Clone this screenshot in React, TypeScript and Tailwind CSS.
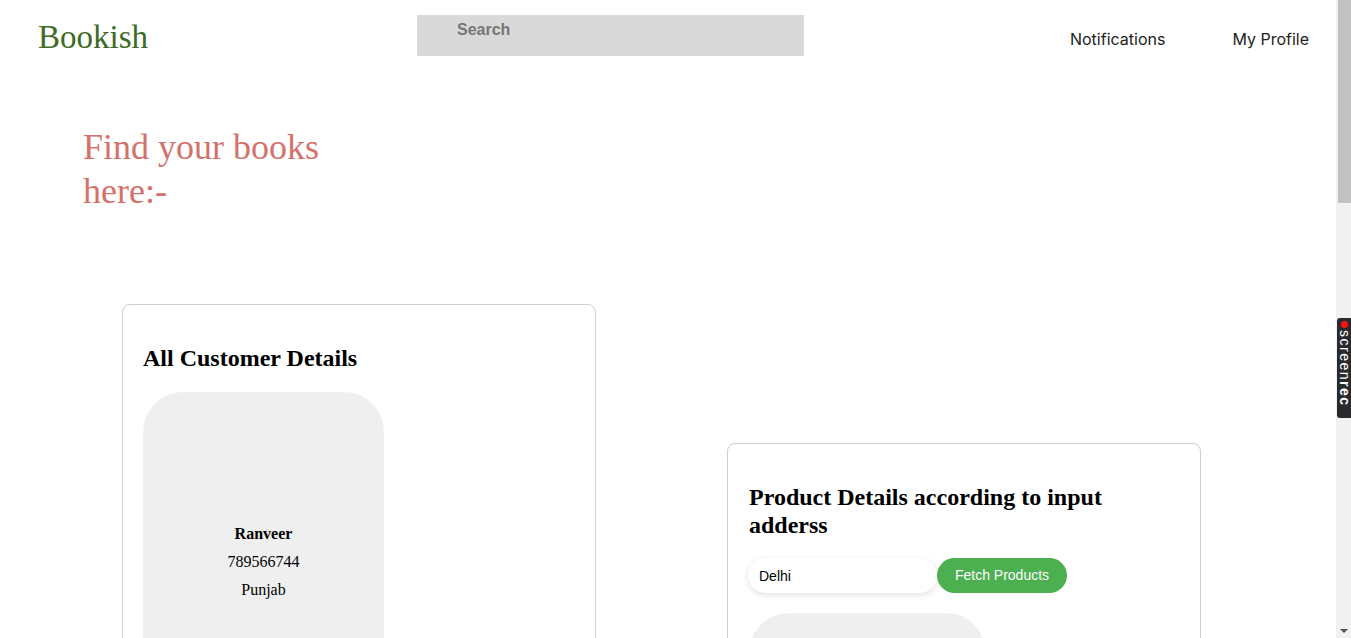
import { useState } from 'react'

const serif = "font-['Liberation_Serif','Times_New_Roman',serif]"
const sans = "font-['Liberation_Sans',Arial,sans-serif]"

function Header() {
  return (
    <header className="flex items-start h-[72px]">
      <div className={`${serif} text-[33px] text-[#3d6b27] leading-none pl-[38px] pt-[21px] w-[417px]`}>Bookish</div>
      <input
        className={`${sans} mt-[15px] w-[387px] h-[41px] bg-[#d9d9d9] pl-[40px] pt-[4px] pb-[16px] text-[16px] font-semibold text-[#333] placeholder:text-[#767676] outline-none`}
        placeholder="Search"
      />
      <nav className="ml-auto flex gap-[67px] pr-[27px] pt-[29px] font-['Inter',sans-serif] text-[16px] text-[#222] leading-[20px]">
        <a>Notifications</a>
        <a>My Profile</a>
      </nav>
    </header>
  )
}

function Customers() {
  const customers = [{ name: 'Ranveer', phone: '789566744', city: 'Punjab' }]
  return (
    <section className="w-[474px] h-[400px] shrink-0 border border-[#cfcfcf] rounded-[8px] px-[20px] pt-[20px]">
      <h2 className={`${serif} text-[24px] font-bold leading-[27.6px] mt-[20px] mb-[19px] text-black`}>All Customer Details</h2>
      {customers.map((c) => (
        <div key={c.phone} className={`${serif} w-[241px] h-[300px] bg-[#efefef] rounded-t-[40px] flex flex-col items-center pt-[128px] text-[16px] leading-[28px] text-black`}>
          <div className="font-bold">{c.name}</div>
          <div>{c.phone}</div>
          <div>{c.city}</div>
        </div>
      ))}
    </section>
  )
}

function Products() {
  const [city, setCity] = useState('Delhi')
  return (
    <section className="w-[474px] h-[300px] shrink-0 mt-[139px] border border-[#cfcfcf] rounded-[8px] pl-[21px] pr-[20px] pt-[20px]">
      <h2 className={`${serif} text-[24px] font-bold leading-[27.6px] mt-[20px] mb-[19px] text-black`}>
        Product Details according to input adderss
      </h2>
      <div className={`${sans} flex items-center text-[14px] -ml-px`}>
        <input
          value={city}
          onChange={(e) => setCity(e.target.value)}
          className="w-[189px] h-[35px] rounded-full bg-white pl-[11px] shadow-[0_2px_6px_rgba(0,0,0,0.12)] outline-none text-black"
        />
        <button className="w-[130px] h-[35px] rounded-full bg-[#4caf50] text-white">Fetch Products</button>
      </div>
      <div className="mt-[20px] w-[237px] h-[200px] bg-[#efefef] rounded-t-[40px]" />
    </section>
  )
}

export default function App() {
  return (
    <div className="relative w-[1351px] h-[638px] overflow-hidden bg-white flex">
      <main className="w-[1336px] shrink-0">
        <Header />
        <h1 className={`${serif} text-[36px] leading-[44px] text-[#d4716b] pl-[83px] pt-[53px] w-[340px]`}>
          Find your books here:-
        </h1>
        <div className="flex gap-[131px] pl-[122px] mt-[91px]">
          <Customers />
          <Products />
        </div>
      </main>
      <div className="w-[15px] h-full bg-[#f1f1f1] flex flex-col items-end">
        <div className="w-[13px] h-[203px] bg-[#c1c1c1]" />
        <div className="mt-auto mb-[5px] mr-[3px] w-0 h-0 border-x-[4px] border-x-transparent border-t-[4px] border-t-[#505050]" />
      </div>
      <div className="absolute right-0 top-[318px] w-[14px] h-[100px] bg-[#2a2a2e] rounded-l-[3px] flex flex-col items-center pt-[3px]">
        <div className="w-[7px] h-[7px] rounded-full bg-[#ff1010]" />
        <div className={`${sans} mt-[2px] text-[14px] leading-[13px] tracking-[1.5px] text-white [writing-mode:vertical-rl]`}>
          screen<span className="font-bold">rec</span>
        </div>
      </div>
    </div>
  )
}
